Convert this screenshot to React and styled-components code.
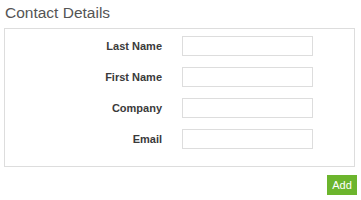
import React from 'react';
import styled, { createGlobalStyle } from 'styled-components';

const GlobalStyle = createGlobalStyle`
  body {
    margin: 0;
    background: #fff;
    font-family: "Liberation Sans", Arial, sans-serif;
  }
`

const Page = styled.div`
  width: 361px;
  padding: 3px 6px 0 4px;
  box-sizing: border-box;
`

const Title = styled.h2`
  margin: 0 0 6px 1px;
  font-size: 15.5px;
  font-weight: normal;
  color: #555;
  line-height: 19px;
`

const Panel = styled.div`
  border: 1px solid #ddd;
  padding: 7px 0 17px;
  display: flex;
  flex-direction: column;
  gap: 11px;
`

const Row = styled.div`
  display: flex;
  align-items: center;
  height: 20px;
`

const Label = styled.label`
  width: 157px;
  text-align: right;
  font-size: 11px;
  font-weight: bold;
  color: #3a3a3a;
  padding-right: 20px;
`

const Input = styled.input`
  width: 131px;
  height: 20px;
  box-sizing: border-box;
  border: 1px solid #ddd;
  padding: 2px 4px;
  font-size: 11px;
  outline: none;
`

const Footer = styled.div`
  display: flex;
  justify-content: flex-end;
  padding-top: 8px;
`

const AddButton = styled.button`
  background: #6cb52d;
  color: #fff;
  border: none;
  font-family: "Liberation Sans", Arial, sans-serif;
  font-size: 11px;
  width: 30px;
  height: 20px;
  padding: 0;
  margin-right: -2px;
  cursor: pointer;
`

const fields = ['Last Name', 'First Name', 'Company', 'Email'];

const App = () => (
  <Page>
    <GlobalStyle />
    <Title>Contact Details</Title>
    <Panel>
      {fields.map(f => (
        <Row key={f}>
          <Label>{f}</Label>
          <Input type="text" />
        </Row>
      ))}
    </Panel>
    <Footer>
      <AddButton>Add</AddButton>
    </Footer>
  </Page>
);

export default App;
